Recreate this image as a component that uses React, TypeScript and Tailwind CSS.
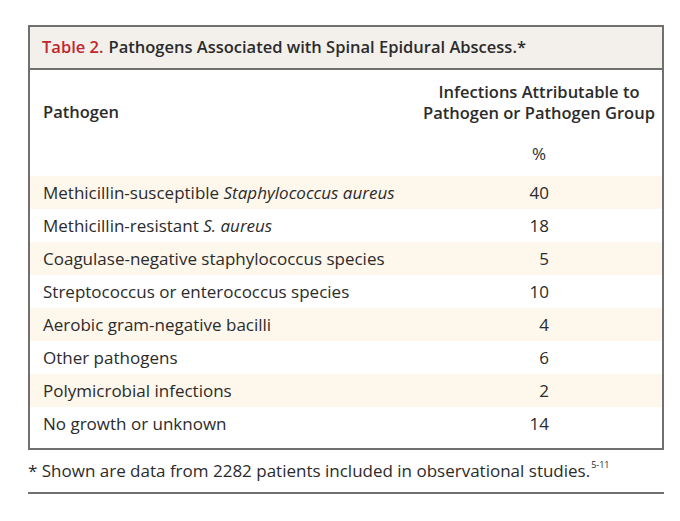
const rows: { name: React.ReactNode; value: string }[] = [
  {
    name: (
      <>
        Methicillin-susceptible <i>Staphylococcus aureus</i>
      </>
    ),
    value: '40',
  },
  {
    name: (
      <>
        Methicillin-resistant <i>S. aureus</i>
      </>
    ),
    value: '18',
  },
  { name: 'Coagulase-negative staphylococcus species', value: '5' },
  { name: 'Streptococcus or enterococcus species', value: '10' },
  { name: 'Aerobic gram-negative bacilli', value: '4' },
  { name: 'Other pathogens', value: '6' },
  { name: 'Polymicrobial infections', value: '2' },
  { name: 'No growth or unknown', value: '14' },
]

export default function App() {
  return (
    <div className="w-[680px] h-[521px] bg-white pt-[25px] pl-[28px] text-[#2b2b2b] font-['Open_Sans','Liberation_Sans',sans-serif]">
      <div className="w-[636px]">
        <div className="border-2 border-[#707070]">
          {/* title band */}
          <div className="h-[43px] bg-[#f3f0ec] border-b-2 border-[#707070] px-[12px] flex items-center text-[16.5px] font-semibold">
            <span className="text-[#c1272d]">Table 2.</span>
            <span className="ml-[5px]">Pathogens Associated with Spinal Epidural Abscess.*</span>
          </div>

          {/* column heads */}
          <div className="grid grid-cols-[1fr_246px] h-[106px] text-[16.5px]">
            <div className="pl-[13px] pt-[30px] font-semibold">Pathogen</div>
            <div className="flex flex-col items-center pt-[11px]">
              <div className="font-semibold text-center leading-[21px]">
                Infections Attributable to
                <br />
                Pathogen or Pathogen Group
              </div>
              <div className="mt-[18px] text-[17px]">%</div>
            </div>
          </div>

          {/* body rows */}
          <div className="pb-[8px] text-[17px]">
            {rows.map((r, i) => (
              <div
                key={i}
                className={`grid grid-cols-[1fr_246px] h-[33px] items-center ${i % 2 === 0 ? 'bg-[#fdf7ec]' : 'bg-white'}`}
              >
                <div className="pl-[13px]">{r.name}</div>
                <div className="flex justify-center">
                  <span className="w-[20px] text-right">{r.value}</span>
                </div>
              </div>
            ))}
          </div>
        </div>

        <div className="pt-[8px] pb-[8px] text-[17px] border-b-2 border-[#707070]">
          * Shown are data from 2282 patients included in observational studies.
          <sup className="text-[9px] align-[5px] ml-[1px]">5-11</sup>
        </div>
      </div>
    </div>
  )
}
